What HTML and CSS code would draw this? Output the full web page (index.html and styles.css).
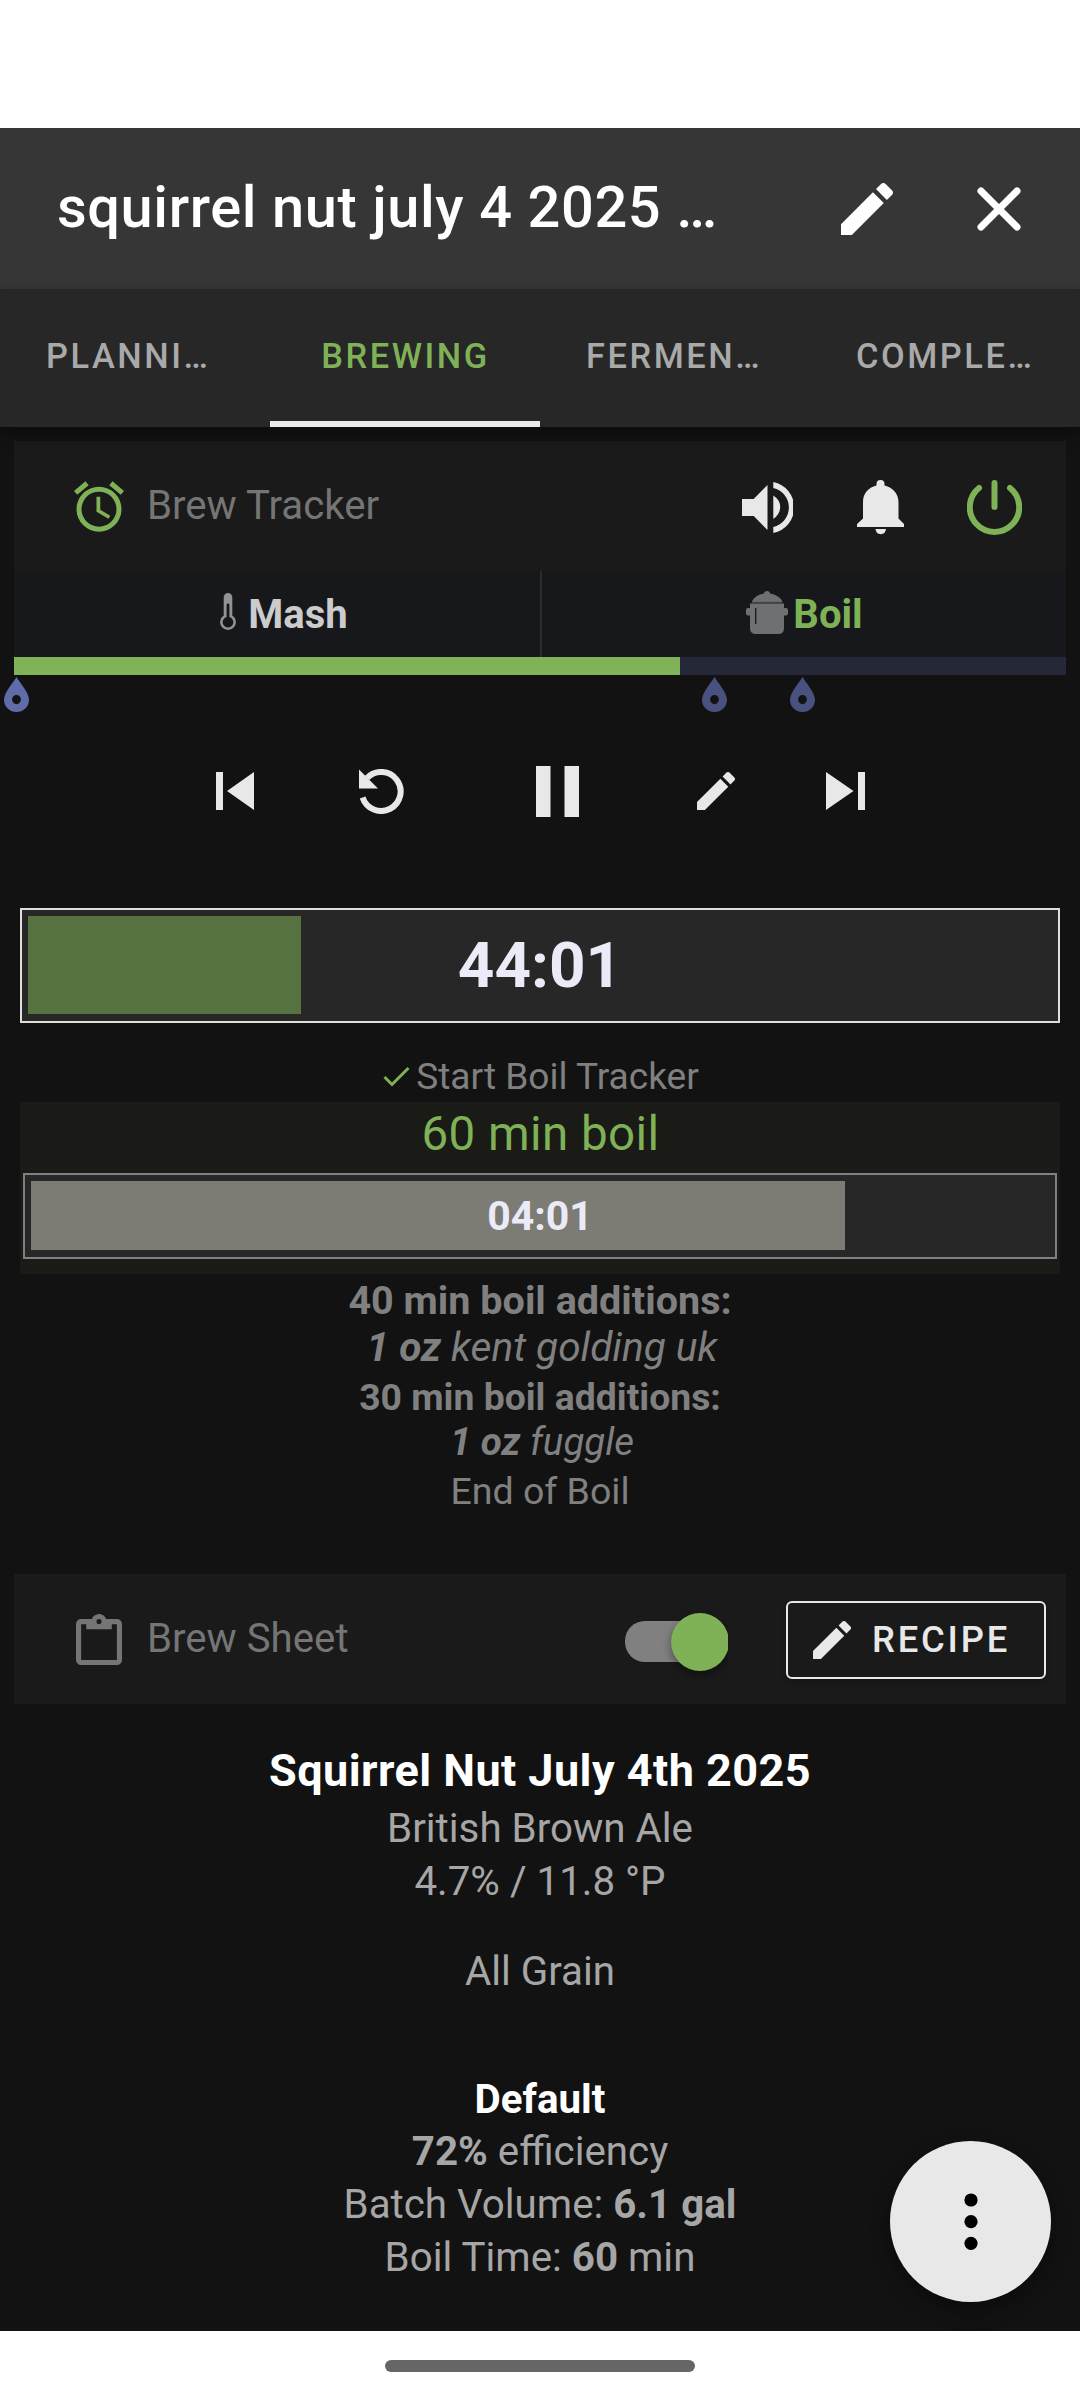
FILE: index.html
```html
<!DOCTYPE html>
<html lang="en">
<head>
<meta charset="utf-8">
<title>squirrel nut july 4 2025</title>
<link rel="stylesheet" href="styles.css">
</head>
<body>
<svg class="defs" width="0" height="0" aria-hidden="true">
  <symbol id="pencil" viewBox="3 3 18 18"><path d="M20.71 7.04c.39-.39.39-1.04 0-1.41l-2.34-2.34c-.37-.39-1.02-.39-1.41 0l-1.84 1.83 3.75 3.75M3 17.25V21h3.75L17.81 9.93l-3.75-3.75L3 17.25z"/></symbol>
  <symbol id="drop" viewBox="0 0 25 35"><path fill-rule="evenodd" d="M12.5 0C10 5 0 15 0 23a12.5 12 0 0 0 25 0C25 15 15 5 12.5 0zm0 18a4.4 4.6 0 1 1 0 9.200 4.400 4.600 0 0 1 0-9.200z"/></symbol>
</svg>

<div class="status-bar"></div>

<header class="app-bar">
  <h1 class="app-title">squirrel nut july 4 2025 …</h1>
  <svg class="bar-edit"><use href="#pencil"/></svg>
  <svg class="bar-close" viewBox="0 0 44 44"><path d="M4 4l36 36M40 4L4 40"/></svg>
</header>

<nav class="tabs">
  <a class="tab">PLANNI…</a>
  <a class="tab active">BREWING</a>
  <a class="tab">FERMEN…</a>
  <a class="tab">COMPLE…</a>
</nav>

<main class="content">
  <section class="card-head">
    <svg class="head-icon alarm" viewBox="2 1.860 20 20.140"><path d="M12,20A7,7 0 0,1 5,13A7,7 0 0,1 12,6A7,7 0 0,1 19,13A7,7 0 0,1 12,20M12,4A9,9 0 0,0 3,13A9,9 0 0,0 12,22A9,9 0 0,0 21,13A9,9 0 0,0 12,4M12.5,8H11V14L15.750,16.850L16.500,15.620L12.500,13.250V8M7.880,3.390L6.600,1.860L2,5.710L3.290,7.240L7.880,3.390M22,5.720L17.400,1.860L16.110,3.390L20.710,7.250L22,5.720Z"/></svg>
    <h2 class="head-title">Brew Tracker</h2>
    <svg class="volume" viewBox="0 0 51 51"><path d="M0 17h11.700L25.500 3v45L11.700 34H0zM31.300 13.500Q38.200 18 38.200 25T31.300 37zM31.300 0a26 26 0 0 1 0 51v-6a20 20 0 0 0 0-39z"/></svg>
    <svg class="bell" viewBox="0 0 47 55"><path d="M19.500 5.500V4a4 4 0 0 1 8 0v1.500C36 7.500 41.500 14 41.500 22v16.500L47 44v3H0v-3l6-5.500V22C6 14 11 7.500 19.500 5.500zM18.500 49h10.500a5.300 6 0 0 1-10.500 0z"/></svg>
    <svg class="power" viewBox="0 0 55 55"><path d="M12 8a24.700 24.700 0 1 0 31 0M27.500 3v24"/></svg>
  </section>

  <section class="steps">
    <div class="step mash">
      <svg class="thermometer" viewBox="0 0 16 38"><path fill-rule="evenodd" d="M3.700 4.300a4.300 4.300 0 0 1 8.600 0v18.200a7.900 7.900 0 1 1-8.600 0zM6.600 12v12a5.300 5.300 0 1 0 2.800 0V12a1.400 1.400 0 0 0-2.800 0z"/></svg>
      <span>Mash</span>
    </div>
    <div class="step boil">
      <svg class="pot" viewBox="0 0 42 43"><path d="M6 10.500Q9 4 18 2.500a3 2.500 0 0 1 6 0Q33 4 36.500 10.500L35 11.500H7zM4 12.500h34V17h2q2 0 2 2v3.500q0 2-2 2h-2V37q0 6-6 6H10q-6 0-6-6V24.500H2q-2 0-2-2V19q0-2 2-2h2z"/><path class="pot-seam" d="M6 11.500h30"/><path class="pot-slit" d="M9.700 17v16"/></svg>
      <span>Boil</span>
    </div>
  </section>
  <div class="timeline"><div class="timeline-done" style="width:666px"></div></div>
  <div class="markers">
    <svg class="marker past" style="left:-10px"><use href="#drop"/></svg>
    <svg class="marker" style="left:688px"><use href="#drop"/></svg>
    <svg class="marker" style="left:776px"><use href="#drop"/></svg>
  </div>

  <div class="controls">
    <svg class="prev" viewBox="0 0 38 38"><path d="M0 0h7v38H0zM38 0v38L11 19z"/></svg>
    <svg class="rewind" viewBox="0 0 45 45"><path class="arc" d="M8 9A19.500 19.500 0 1 1 3.600 28.500"/><path d="M0 .500V19.500h19z"/></svg>
    <svg class="pause" viewBox="0 0 43 51"><path d="M0 0h14.500v51H0zM28.500 0H43v51H28.500z"/></svg>
    <svg class="edit"><use href="#pencil"/></svg>
    <svg class="next" viewBox="0 0 39 38"><path d="M0 0l27.500 19L0 38zM32 0h7v38h-7z"/></svg>
  </div>

  <section class="tracker">
    <div class="timer main-timer">
      <div class="timer-fill" style="width:273px"></div>
      <span class="timer-text">44:01</span>
    </div>
    <div class="event started">
      <svg class="check" viewBox="0 0 27 21"><path d="M1.500 11l7.500 7.500L25.500 2"/></svg>
      <span>Start Boil Tracker</span>
    </div>
    <div class="current">
      <div class="current-title">60 min boil</div>
      <div class="timer step-timer">
        <div class="timer-fill" style="width:814px"></div>
        <span class="timer-text">04:01</span>
      </div>
    </div>
    <div class="event addition first"><b>40 min boil additions:</b></div>
    <div class="event hop first"><b>1 oz</b> kent golding uk</div>
    <div class="event addition"><b>30 min boil additions:</b></div>
    <div class="event hop"><b>1 oz</b> fuggle</div>
    <div class="event end">End of Boil</div>
  </section>

  <section class="card-head sheet-head">
    <svg class="head-icon clipboard" viewBox="3 1 18 20"><path d="M19,3H14.820C14.400,1.840 13.300,1 12,1C10.700,1 9.600,1.840 9.180,3H5A2,2 0 0,0 3,5V19A2,2 0 0,0 5,21H19A2,2 0 0,0 21,19V5A2,2 0 0,0 19,3M12,3A1,1 0 0,1 13,4A1,1 0 0,1 12,5A1,1 0 0,1 11,4A1,1 0 0,1 12,3M7,7H17V5H19V19H5V5H7V7Z"/></svg>
    <h2 class="head-title">Brew Sheet</h2>
    <div class="switch"><div class="switch-thumb"></div></div>
    <button class="recipe-button"><svg class="edit"><use href="#pencil"/></svg>RECIPE</button>
  </section>

  <section class="sheet">
    <h3 class="sheet-title">Squirrel Nut July 4th 2025</h3>
    <p>British Brown Ale</p>
    <p>4.7% / 11.8 °P</p>
    <p class="method">All Grain</p>
    <h4 class="profile">Default</h4>
    <p><b>72%</b> efficiency</p>
    <p>Batch Volume: <b>6.1 gal</b></p>
    <p>Boil Time: <b>60</b> min</p>
  </section>

  <button class="fab" aria-label="More"><svg viewBox="0 0 14 58"><circle cx="7" cy="7" r="6.600"/><circle cx="7" cy="28.700" r="6.600"/><circle cx="7" cy="50.300" r="6.600"/></svg></button>
</main>

<footer class="gesture-bar"><div class="gesture-pill"></div></footer>
</body>
</html>
```

FILE: styles.css
```css
* { box-sizing: border-box; }

body {
  margin: 0;
  width: 1080px;
  height: 2400px;
  display: flex;
  flex-direction: column;
  background: #fff;
  font-family: Roboto, sans-serif;
  overflow: hidden;
}

h1, h2, h3, h4, p { margin: 0; font-weight: 400; }
button { font-family: inherit; padding: 0; }
svg { display: block; flex: none; fill: currentColor; }
.defs { position: absolute; }

.status-bar { height: 128px; }

/* App bar and tabs */
.app-bar {
  height: 161px;
  display: flex;
  align-items: center;
  padding: 0 59px 0 57px;
  background: #363636;
  color: #fff;
}
.app-title {
  flex: 1;
  padding-bottom: 3px;
  font-size: 57.750px;
  font-weight: 500;
  letter-spacing: .6px;
}
.bar-edit { width: 52px; height: 52px; }
.bar-close {
  width: 44px;
  height: 44px;
  margin-left: 84px;
  stroke: currentColor;
  stroke-width: 7;
  stroke-linecap: round;
}

.tabs {
  position: relative;
  z-index: 1;
  height: 138px;
  display: grid;
  grid-template: 138px / repeat(4, 1fr);
  background: #272727;
  box-shadow: 0 6px 14px rgba(0, 0, 0, .35);
}
.tab {
  padding: 3px 0 0 46px;
  border-bottom: 6px solid transparent;
  line-height: 129px;
  font-size: 34.400px;
  font-weight: 500;
  letter-spacing: 2.550px;
  color: #a9a9a9;
}
.tab.active {
  padding-left: 1px;
  text-align: center;
  border-color: #e9e9e9;
  color: #7fb157;
}

.content {
  position: relative;
  height: 1904px;
  padding: 14px 14px 0;
  background: #121212;
}

/* Card header rows */
.card-head {
  height: 130px;
  display: flex;
  align-items: center;
  padding-left: 60px;
  background: #1a1a1a;
  color: #e8e8e8;
}
.head-title {
  flex: 1;
  margin-left: 23px;
  padding-bottom: 1px;
  font-size: 40.200px;
  color: #757575;
}
.alarm { width: 50px; height: 51px; color: #7fb157; }
.volume { width: 51px; height: 51px; margin-top: 3px; }
.bell { width: 47px; height: 55px; margin: 3px 0 0 64px; }
.power {
  width: 55px;
  height: 55px;
  margin: 3px 44px 0 63px;
  fill: none;
  stroke: #7fb157;
  stroke-width: 6;
  stroke-linecap: round;
}

/* Brewing steps with the progress timeline */
.steps {
  height: 86px;
  display: grid;
  grid-template-columns: 528px 1fr;
  background: #17181c;
}
.step {
  display: flex;
  align-items: center;
  justify-content: center;
  font-size: 40px;
  font-weight: 700;
}
.mash { border-right: 2px solid #2c2d30; padding-left: 14px; color: #ccc; }
.mash span { margin: 0 0 0 12px; }
.boil { padding-left: 1px; color: #7fb157; }
.boil span { margin: 0 0 0 5px; }
.thermometer { width: 16px; height: 38px; margin-bottom: 4px; color: #929395; }
.pot { width: 42px; height: 43px; margin-bottom: 4px; color: #6f7072; }
.pot-seam { stroke: #46474a; stroke-width: 1.500; }
.pot-slit { stroke: #17181c; stroke-width: 1.300; }

.timeline { height: 18px; background: #252839; }
.timeline-done { height: 18px; background: #80b258; }
.markers { position: relative; height: 45px; }
.marker {
  position: absolute;
  top: 2px;
  width: 25px;
  height: 35px;
  color: #49527f;
}
.marker.past { color: #5f6ca9; }

.controls {
  height: 142px;
  display: flex;
  align-items: center;
  padding-left: 202px;
  color: #e8e8e8;
}
.prev { width: 38px; height: 38px; }
.rewind { width: 45px; height: 45px; margin-left: 105px; }
.arc { fill: none; stroke: currentColor; stroke-width: 6; }
.pause { width: 43px; height: 51px; margin-left: 132px; }
.edit { width: 38px; height: 38px; }
.controls .edit { margin-left: 118px; }
.next { width: 39px; height: 38px; margin-left: 91px; }

/* Boil tracker */
.tracker {
  margin-top: 46px;
  padding: 0 6px;
  text-align: center;
  color: #808080;
}
.timer {
  position: relative;
  display: flex;
  align-items: stretch;
  padding: 6px;
  border: 2px solid #dcdfdc;
  background: #272727;
}
.timer-text {
  position: absolute;
  inset: 0;
  font-weight: 700;
  color: #ebebf8;
}
.main-timer { height: 115px; }
.main-timer .timer-fill { background: #557240; height: 98px; }
.main-timer .timer-text { font-size: 63.800px; line-height: 112px; }

.event { font-size: 37.100px; }
.started {
  display: flex;
  align-items: center;
  justify-content: center;
  height: 79px;
  padding: 27px 0 0 2px;
}
.check {
  width: 27px;
  height: 21px;
  margin-right: 6px;
  fill: none;
  stroke: #7fb157;
  stroke-width: 3;
}
.current { height: 172px; padding: 0 3px; background: #1a1b16; }
.current-title {
  height: 71px;
  padding-left: 1px;
  line-height: 64px;
  font-size: 47.500px;
  letter-spacing: .45px;
  color: #7fb157;
}
.step-timer { height: 86px; border-color: #808080; }
.step-timer .timer-fill { background: #7c7c75; height: 69px; }
.step-timer .timer-text { font-size: 41px; line-height: 82px; }

.addition { font-size: 37.350px; line-height: 59px; }
.addition.first { font-size: 39.550px; line-height: 53px; }
.hop { padding-left: 4px; font-size: 38.400px; line-height: 29px; font-style: italic; }
.hop.first { font-size: 40.600px; line-height: 41px; }
.end { font-size: 37.500px; line-height: 71px; }

/* Brew sheet */
.sheet-head { margin-top: 47px; padding-left: 62px; }
.clipboard { width: 46px; height: 53px; color: #757575; }
.sheet-head .head-title { margin-left: 25px; }
.switch {
  width: 103px;
  height: 80px;
  display: flex;
  align-items: center;
  justify-content: flex-end;
  overflow: hidden;
  margin-top: 5px;
}
.switch::before {
  content: "";
  flex: none;
  width: 84px;
  height: 41px;
  border-radius: 20px;
  background: #808080;
}
.switch-thumb {
  flex: none;
  width: 58px;
  height: 58px;
  margin: 0 -1px 0 -38px;
  border-radius: 50%;
  background: #7fb157;
  box-shadow: 0 4px 8px rgba(0, 0, 0, .4);
}
.recipe-button {
  width: 260px;
  height: 78px;
  margin: 2px 20px 0 58px;
  display: flex;
  align-items: center;
  padding: 0 0 1px 25px;
  border: 2px solid #e8e8e8;
  border-radius: 6px;
  background: none;
  color: #e8e8e8;
  font-size: 36.400px;
  font-weight: 500;
  letter-spacing: 2.800px;
  box-shadow: 0 4px 6px rgba(0, 0, 0, .15);
}
.recipe-button .edit { margin-right: 21px; }

.sheet {
  padding-top: 40px;
  text-align: center;
  font-size: 40.300px;
  line-height: 53px;
  color: #a6a6a6;
}
.sheet-title {
  margin-bottom: 5px;
  font-size: 45px;
  font-weight: 700;
  letter-spacing: .45px;
  color: #fff;
}
.method { margin-top: 37px; }
.profile { margin-top: 75px; margin-bottom: -1px; font-weight: 700; color: #fff; }

.fab {
  position: absolute;
  right: 29px;
  bottom: 29px;
  width: 161px;
  height: 161px;
  display: flex;
  align-items: center;
  justify-content: center;
  border: 0;
  border-radius: 50%;
  background: #e8e8e8;
  color: #000;
  box-shadow: 0 8px 20px rgba(0, 0, 0, .4);
}
.fab svg { width: 14px; height: 58px; }

/* System gesture area */
.gesture-bar { height: 69px; padding-top: 29px; background: #fff; }
.gesture-pill {
  width: 310px;
  height: 12px;
  margin: 0 auto;
  border-radius: 6px;
  background: #666;
}
```
